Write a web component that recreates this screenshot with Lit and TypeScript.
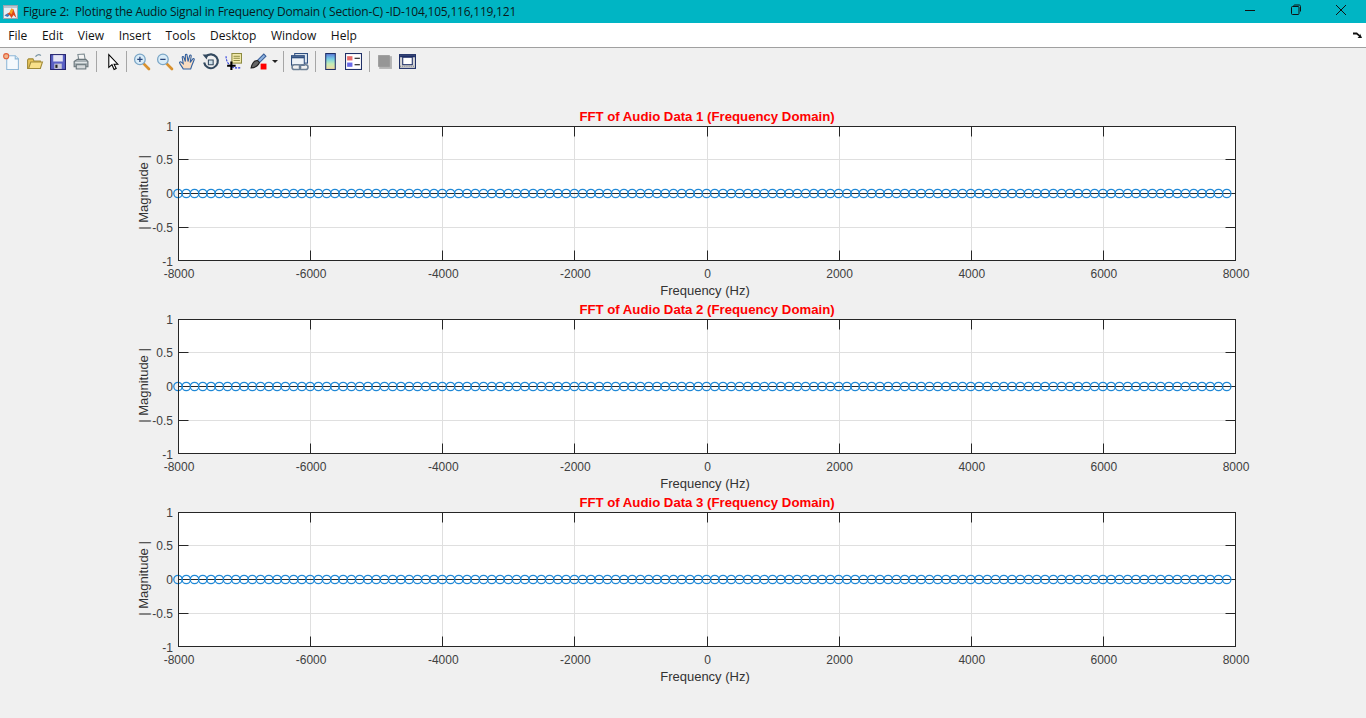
import { LitElement, html, css, svg } from 'lit'
import { customElement, property } from 'lit/decorators.js'

const AX = { left: 178.5, right: 1235.5, top: 26.5, bottom: 160.5 }
const xPos = (f: number) => AX.left + ((f + 8000) / 16000) * (AX.right - AX.left)
const yPos = (v: number) => AX.top + ((1 - v) / 2) * (AX.bottom - AX.top)
// tick lines sit on whole pixels, the lower half rounds down a row like the original
const xLine = (f: number) => Math.floor(xPos(f)) + 0.5
const yLine = (v: number) => Math.round(yPos(v) + (v < 0 ? 1 : 0)) - 0.5
const xTicks = [-8000, -6000, -4000, -2000, 0, 2000, 4000, 6000, 8000]
const yTicks = [1, 0.5, 0, -0.5, -1]
const samples = Array.from({ length: 128 }, (_, i) => -8000 + i * 125)

@customElement('fft-plot')
export class FftPlot extends LitElement {
    @property({ type: String })
    heading = ''

    static styles = css`
      :host {
        display: block;
        height: 193px;
      }
      svg {
        display: block;
        overflow: visible;
        font-family: "Liberation Sans", Arial, sans-serif;
      }
      .grid {
        stroke: #dfdfdf;
        stroke-width: 1;
      }
      .axis {
        stroke: #262626;
        stroke-width: 1;
        fill: none;
      }
      .tick-label {
        font-size: 12px;
        fill: #404040;
      }
      .axis-label {
        font-size: 13px;
        fill: #333;
        text-anchor: middle;
      }
      .heading {
        font-size: 13.2px;
        font-weight: 700;
        fill: #ff0000;
        text-anchor: middle;
      }
      .marker {
        fill: none;
        stroke: #1f88d6;
        stroke-width: 1.25;
      }
    `

    protected override render() {
        const y0 = yPos(0)
        return html`
        <svg width="1366" height="193" viewBox="0 0 1366 193">
            <rect x=${AX.left} y=${AX.top} width=${AX.right - AX.left} height=${AX.bottom - AX.top} fill="#fff"></rect>
            ${xTicks.slice(1, -1).map(t => svg`<line class="grid" x1=${xLine(t)} x2=${xLine(t)} y1=${AX.top} y2=${AX.bottom}></line>`)}
            ${yTicks.slice(1, -1).map(t => svg`<line class="grid" x1=${AX.left} x2=${AX.right} y1=${yLine(t)} y2=${yLine(t)}></line>`)}
            ${xTicks.slice(1, -1).map(t => svg`
                <line class="axis" x1=${xLine(t)} x2=${xLine(t)} y1=${AX.top} y2=${AX.top + 10}></line>
                <line class="axis" x1=${xLine(t)} x2=${xLine(t)} y1=${AX.bottom} y2=${AX.bottom - 10}></line>`)}
            ${yTicks.slice(1, -1).map(t => svg`
                <line class="axis" x1=${AX.left} x2=${AX.left + 10} y1=${yLine(t)} y2=${yLine(t)}></line>
                <line class="axis" x1=${AX.right} x2=${AX.right - 10} y1=${yLine(t)} y2=${yLine(t)}></line>`)}
            <line class="axis" x1=${AX.left} x2=${AX.right} y1=${y0} y2=${y0}></line>
            ${samples.map(f => svg`<circle class="marker" cx=${xPos(f) - 0.5} cy=${y0} r="4.200"></circle>`)}
            <rect class="axis" x=${AX.left} y=${AX.top} width=${AX.right - AX.left} height=${AX.bottom - AX.top}></rect>
            ${xTicks.map(t => svg`<text class="tick-label" x=${xPos(t) + 0.5} y="178" text-anchor="middle">${t}</text>`)}
            ${yTicks.map(t => svg`<text class="tick-label" x="173" y=${yLine(t) + 4} text-anchor="end">${t}</text>`)}
            <text class="axis-label" x="705" y="195">Frequency (Hz)</text>
            <text class="axis-label" transform="translate(148 92.5) rotate(-90)">| Magnitude |</text>
            <text class="heading" x="707" y="21">${this.heading}</text>
        </svg>
        `
    }
}

const icons = {
    newFile: svg`
        <path d="M3.500 2.500h8l3 3v10h-11z" fill="#f4f9fd" stroke="#8fb8d8"></path>
        <path d="M11.500 2.500v3h3" fill="#dcebf5" stroke="#8fb8d8"></path>
        <circle cx="3" cy="3" r="2.400" fill="#f2b48c" stroke="#e2603a"></circle>`,
    open: svg`
        <path d="M9 3.500c1-2 3.500-2.500 5-1" fill="none" stroke="#7d98a8" stroke-width="1.200"></path>
        <path d="M1.500 6.500v8h12v-7h-6l-1-2h-4z" fill="#e8c45a" stroke="#a08a38"></path>
        <path d="M2.500 14.500l2-6h11l-2 6z" fill="#f8e08a" stroke="#a08a38"></path>`,
    save: svg`
        <rect x="1.500" y="1.500" width="14" height="14" fill="#5a60c4" stroke="#25256e"></rect>
        <rect x="4" y="2" width="9" height="6" fill="#e6e6f4"></rect>
        <rect x="5" y="10" width="7" height="5" fill="#c8c8d8"></rect>
        <rect x="6" y="11" width="2" height="3" fill="#222"></rect>`,
    print: svg`
        <path d="M5.500 1.500l6-.5 1 6h-6z" fill="#f4f4f4" stroke="#7c8a90"></path>
        <path d="M2 8l3-2h8l2 2v5H2z" fill="#a9b2b6" stroke="#6a767b"></path>
        <rect x="4" y="11" width="9" height="4" fill="#d6dadc" stroke="#6a767b"></rect>
        <path d="M3 9h11" stroke="#e4e8ea"></path>`,
    pointer: svg`
        <path d="M4.500 1.500v12l3-2.500 2 4.500 2-1-2-4h3.500z" fill="#fff" stroke="#000"></path>`,
    zoomIn: svg`
        <path d="M10 10l5 5" stroke="#d8912f" stroke-width="2.600" stroke-linecap="round"></path>
        <circle cx="6.500" cy="6" r="5" fill="#d9ecf8" stroke="#7ba6c6" stroke-width="1.200"></circle>
        <path d="M4 6h5M6.500 3.500v5" stroke="#28457a" stroke-width="1.200"></path>`,
    zoomOut: svg`
        <path d="M10 10l5 5" stroke="#d8912f" stroke-width="2.600" stroke-linecap="round"></path>
        <circle cx="6.500" cy="6" r="5" fill="#d9ecf8" stroke="#7ba6c6" stroke-width="1.200"></circle>
        <path d="M4 6h5" stroke="#28457a" stroke-width="1.200"></path>`,
    hand: svg`
        <path d="M4 15c-1-2-3-4-3.500-6 0-1 1.200-1 2-.2L4 10 3 4c0-1 1.300-1 1.600 0L6 8l0-6c0-1 1.500-1 1.600 0L8.500 8 10 2.500c.3-1 1.600-.7 1.500.3L10.500 9 13 5.500c.7-.8 1.700 0 1.300.8L12 12l-1 3z" fill="#f9dcc0" stroke="#2f5f9f"></path>`,
    rotate: svg`
        <path d="M3.500 3.500A6.500 6.500 0 1 1 2 9" fill="none" stroke="#33495f" stroke-width="2"></path>
        <path d="M0.500 1.500h5l-1 4.500z" fill="#33495f"></path>
        <path d="M6 6.500h4.500v4.500H6z" fill="#cfe0ea" stroke="#33495f"></path>`,
    datatip: svg`
        <rect x="6.500" y="0.500" width="9" height="9" fill="#f6eeb0" stroke="#8c8a40"></rect>
        <path d="M8 3h6M8 5h6M8 7h6" stroke="#8c8a40"></path>
        <path d="M1 3c0 5 3 10 8 11h6" fill="none" stroke="#2233dd" stroke-dasharray="2 1"></path>
        <path d="M6 8v8M2 12h8" stroke="#000" stroke-width="2"></path>`,
    brush: svg`
        <path d="M7 7l6-6 2 2-6 6z" fill="#8fb4e0" stroke="#3b5f98"></path>
        <path d="M7 7c-3 0-5 3-6 7 3 0 6-1 8-5z" fill="#666" stroke="#222"></path>
        <rect x="10" y="10" width="5.500" height="5.500" fill="#f00"></rect>`,
    link: svg`
        <rect x="3.500" y="0.500" width="12" height="9" fill="#dfe9f2" stroke="#2f4f80"></rect>
        <rect x="0.500" y="2.500" width="12" height="9" fill="#eef3f8" stroke="#2f4f80"></rect>
        <path d="M0.500 4h12" stroke="#2f4f80" stroke-width="2"></path>
        <rect x="1" y="11" width="8" height="4.500" rx="2.200" fill="#f0f0f0" stroke="#6b7f95" stroke-width="1.500"></rect>
        <rect x="8" y="11" width="8" height="4.500" rx="2.200" fill="none" stroke="#6b7f95" stroke-width="1.500"></rect>`,
    colorbar: svg`
        <defs>
            <linearGradient id="cb" x1="0" y1="0" x2="0" y2="1">
                <stop offset="0" stop-color="#5a78d8"></stop>
                <stop offset="0.35" stop-color="#78d0e4"></stop>
                <stop offset="0.65" stop-color="#c4ecb4"></stop>
                <stop offset="1" stop-color="#f6d8a0"></stop>
            </linearGradient>
        </defs>
        <rect x="3.500" y="0.500" width="9" height="15" fill="url(#cb)" stroke="#1f2f66"></rect>`,
    legend: svg`
        <rect x="0.500" y="0.500" width="15" height="15" fill="#fff" stroke="#1f2f66"></rect>
        <rect x="2" y="3" width="5" height="4" fill="#e86a6a"></rect>
        <rect x="2" y="9" width="5" height="4" fill="#6a6ae8"></rect>
        <path d="M9 5h5M9 11h5" stroke="#000"></path>`,
    grayBox: svg`
        <rect x="3" y="3" width="12" height="12" fill="#b4b4b4"></rect>
        <rect x="2" y="2" width="11" height="11" fill="#969696"></rect>`,
    plotTools: svg`
        <rect x="0.500" y="1.500" width="15" height="13" fill="#d8d8d8" stroke="#1f2f66"></rect>
        <path d="M1 3h14" stroke="#1f2f66" stroke-width="2"></path>
        <rect x="3.500" y="4" width="9" height="7" fill="#fff" stroke="#1f2f66"></rect>
        <path d="M1 12.500h14" stroke="#777" stroke-dasharray="1 1"></path>`
}

const menus = ['File', 'Edit', 'View', 'Insert', 'Tools', 'Desktop', 'Window', 'Help']
const plots = [
    'FFT of Audio Data 1 (Frequency Domain)',
    'FFT of Audio Data 2 (Frequency Domain)',
    'FFT of Audio Data 3 (Frequency Domain)'
]

@customElement('app-root')
export class AppRoot extends LitElement {
    static styles = css`
      :host {
        display: flex;
        flex-direction: column;
        min-height: 100vh;
        overflow: hidden;
        background: #f0f0f0;
        font-family: "Open Sans", "Noto Sans", sans-serif;
      }
      .titlebar {
        height: 23px;
        background: #00b5c4;
        display: flex;
        align-items: center;
        color: #0a1a1c;
        font-size: 12px;
        white-space: pre;
        padding-right: 2px;
      }
      .logo {
        width: 15px;
        height: 14px;
        margin: 0 0 0 3px;
      }
      .title {
        margin-left: 5px;
        flex: 1;
        letter-spacing: -0.21px;
      }
      .win-btn {
        width: 45.5px;
        height: 20px;
        align-self: flex-start;
        display: flex;
        align-items: center;
        justify-content: center;
      }
      .win-btn svg {
        width: 12px;
        height: 12px;
      }
      .menubar {
        height: 24px;
        background: #fff;
        border-bottom: 1px solid #a0a0a0;
        display: flex;
        align-items: center;
        font-size: 12px;
        color: #111;
        padding-left: 1px;
      }
      .menu {
        padding: 0 7.3px;
      }
      .menu-arrow {
        margin-left: auto;
        margin-right: 4px;
        width: 9px;
        height: 6px;
      }
      .toolbar {
        height: 26px;
        display: flex;
        align-items: center;
        background: #f0f0f0;
      }
      .tool {
        width: 23px;
        height: 26px;
        display: flex;
        align-items: center;
        justify-content: center;
      }
      .tool svg {
        width: 17px;
        height: 17px;
        overflow: visible;
      }
      .sep {
        width: 1px;
        height: 21px;
        background: #a6a6a6;
        margin: 0 4px;
      }
      .sep.tight {
        margin: 0 3px 0 2px;
      }
      .sep.close {
        margin: 0 3px 0 4px;
      }
      .brush {
        margin-left: 2px;
      }
      .caret {
        width: 0;
        height: 0;
        border-left: 3px solid transparent;
        border-right: 3px solid transparent;
        border-top: 3px solid #222;
        margin: 0 1px 0 2px;
      }
      .canvas {
        flex: 1;
        padding-top: 26px;
      }
    `

    private _tool(icon: unknown) {
        return html`<div class="tool"><svg viewBox="0 0 16 16">${icon}</svg></div>`
    }

    protected override render() {
        return html`
        <div class="titlebar">
            <svg class="logo" viewBox="0 0 15 14">
                <rect x="0.500" y="0.500" width="14" height="13" fill="#e8eef4" stroke="#9aa6b0"></rect>
                <rect x="1" y="1" width="13" height="2" fill="#b8c6d2"></rect>
                <path d="M1.500 10.500l3-2 2-1 2-4 2 1 3 8.500-3-3-2 3-2-3-2 .5z" fill="#e0481a"></path>
                <path d="M8.500 3.500l2 1-2 5-2-2z" fill="#f6a623"></path>
                <path d="M1.500 10.500l3-2 2 2-2 1.500z" fill="#3f7cc0"></path>
            </svg>
            <span class="title">Figure 2:  Ploting the Audio Signal in Frequency Domain ( Section-C) -ID-104,105,116,119,121</span>
            <div class="win-btn">
                <svg viewBox="0 0 12 12"><path d="M1 6.500h10" stroke="#111"></path></svg>
            </div>
            <div class="win-btn">
                <svg viewBox="0 0 12 12">
                    <path d="M3.500 2.500c0-1 .5-1.500 1.500-1.500h4c1 0 1.500 .5 1.500 1.500v5" fill="none" stroke="#111"></path>
                    <rect x="1.500" y="2.500" width="7.500" height="8" rx="1" fill="none" stroke="#111"></rect>
                </svg>
            </div>
            <div class="win-btn">
                <svg viewBox="0 0 12 12"><path d="M1 1l10 10M11 1L1 11" stroke="#111"></path></svg>
            </div>
        </div>
        <div class="menubar">
            ${menus.map(m => html`<span class="menu">${m}</span>`)}
            <svg class="menu-arrow" viewBox="0 0 9 6">
                <path d="M0 .5h4l1 1L7 3V1.500L9 6H4.500L6 4.500 3.500 2.500H0z" fill="#111"></path>
            </svg>
        </div>
        <div class="toolbar">
            ${this._tool(icons.newFile)}
            ${this._tool(icons.open)}
            ${this._tool(icons.save)}
            ${this._tool(icons.print)}
            <div class="sep"></div>
            ${this._tool(icons.pointer)}
            <div class="sep tight"></div>
            ${this._tool(icons.zoomIn)}
            ${this._tool(icons.zoomOut)}
            ${this._tool(icons.hand)}
            ${this._tool(icons.rotate)}
            ${this._tool(icons.datatip)}
            <div class="brush">${this._tool(icons.brush)}</div>
            <div class="caret"></div>
            <div class="sep"></div>
            ${this._tool(icons.link)}
            <div class="sep close"></div>
            ${this._tool(icons.colorbar)}
            ${this._tool(icons.legend)}
            <div class="sep close"></div>
            ${this._tool(icons.grayBox)}
            ${this._tool(icons.plotTools)}
        </div>
        <div class="canvas">
            ${plots.map(p => html`<fft-plot heading=${p}></fft-plot>`)}
        </div>
        `
    }
}

declare global {
    interface HTMLElementTagNameMap {
      'app-root': AppRoot
      'fft-plot': FftPlot
    }
}
